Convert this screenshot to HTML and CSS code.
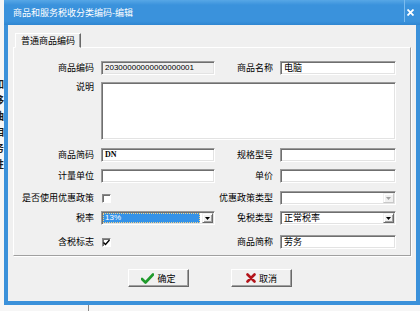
FILE: index.html
```html
<!doctype html>
<html lang="zh-CN">
<head>
    <meta charset="UTF-8">
    <title>商品和服务税收分类编码-编辑</title>
    <link rel="stylesheet" href="styles.css">
</head>
<body>
    <div class="desk-side">如<br>移<br>油<br>相<br>务<br>性</div>
    <div class="desk-line"></div>

    <div class="win">
        <div class="titlebar">
            <span class="title">商品和服务税收分类编码-编辑</span>
            <span class="close">
                <svg width="7" height="7" viewBox="0 0 7 7"><path d="M0.5 0.5L6.5 6.5M6.5 0.5L0.5 6.5" stroke="#fff" stroke-width="1.8"/></svg>
            </span>
        </div>
        <div class="client">
            <div class="tabs"><div class="tab">普通商品编码</div></div>
            <div class="sheet">
                <div class="lbl">商品编码</div>
                <div class="field off num">20300000000000000001</div>
                <div class="lbl">商品名称</div>
                <div class="field">电脑</div>

                <div class="lbl top">说明</div>
                <div class="field memo"></div>

                <div class="lbl">商品简码</div>
                <div class="field num bold">DN</div>
                <div class="lbl">规格型号</div>
                <div class="field"></div>

                <div class="lbl">计量单位</div>
                <div class="field"></div>
                <div class="lbl">单价</div>
                <div class="field"></div>

                <div class="lbl">是否使用优惠政策</div>
                <div class="cell"><span class="chk"></span></div>
                <div class="lbl">优惠政策类型</div>
                <div class="field combo dis">
                    <span class="val"></span>
                    <span class="drop"><svg width="5" height="3" viewBox="0 0 5 3"><path d="M0 0H5L2.5 3Z" fill="#a0a0a0"/></svg></span>
                </div>

                <div class="lbl">税率</div>
                <div class="field combo">
                    <span class="val sel"><span class="focus">13%</span></span>
                    <span class="drop"><svg width="5" height="3" viewBox="0 0 5 3"><path d="M0 0H5L2.5 3Z" fill="#000"/></svg></span>
                </div>
                <div class="lbl">免税类型</div>
                <div class="field combo">
                    <span class="val">正常税率</span>
                    <span class="drop"><svg width="5" height="3" viewBox="0 0 5 3"><path d="M0 0H5L2.5 3Z" fill="#000"/></svg></span>
                </div>

                <div class="lbl">含税标志</div>
                <div class="cell"><span class="chk"><svg width="7" height="7" viewBox="0 0 7 7"><path d="M0.5 3.5L2.5 5.5L6.5 1" fill="none" stroke="#000" stroke-width="1.4"/></svg></span></div>
                <div class="lbl">商品简称</div>
                <div class="field">劳务</div>
            </div>
            <div class="buttons">
                <div class="btn">
                    <svg width="13" height="11" viewBox="0 0 13 11"><path d="M1 6L4.5 9.5L12 1.5" fill="none" stroke="#1f9a2c" stroke-width="2.6" stroke-linecap="round" stroke-linejoin="round"/></svg>
                    确定
                </div>
                <div class="btn">
                    <svg width="10" height="10" viewBox="0 0 10 10"><path d="M1.5 1.5L8.5 8.5M8.5 1.5L1.5 8.5" stroke="#b3141a" stroke-width="2.6" stroke-linecap="round"/></svg>
                    取消
                </div>
            </div>
        </div>
    </div>
</body>
</html>
```

FILE: styles.css
```css
*{padding:0;margin:0;box-sizing:border-box;}

body{
    width:420px;
    height:311px;
    overflow:hidden;
    position:relative;
    background:#f6f6f6;
    font-family:"Noto Sans CJK SC","Liberation Sans",sans-serif;
    font-size:9px;
    color:#000;
}

/* bits of the app behind the dialog */
.desk-side{
    position:absolute;
    left:-6px;
    top:76px;
    font-size:10px;
    line-height:16px;
    font-weight:bold;
    color:#1a1a1a;
}
.desk-line{
    position:absolute;
    left:88px;
    top:305px;
    width:1px;
    height:6px;
    background:#888;
}

.win{
    position:absolute;
    left:4px;
    top:0;
    width:416px;
    height:305px;
    padding:0 4px 4px 4px;
    background:#3b91da;
    display:flex;
    flex-direction:column;
}
.titlebar{
    height:25px;
    display:flex;
    align-items:center;
    background:linear-gradient(#57a7e6,#3a92dc 20%,#3a92dc 85%,#2f86d1);
    margin:0 -4px;
    padding:0 4px 0 9px;
}
.title{
    flex:1;
    color:#fff;
    font-size:9px;
}
.close{
    width:12px;
    height:22px;
    align-self:flex-start;
    border-left:1px solid #7cbcef;
    display:flex;
    align-items:center;
    justify-content:center;
    padding-top:2px;
}

.client{
    flex:1;
    background:#f0f0f0;
    padding:8px 5px 0 5px;
}
.tabs{
    display:flex;
    padding-left:2px;
}
.tab{
    height:15px;
    padding:0 5px;
    line-height:14px;
    background:#f0f0f0;
    border:1px solid;
    border-color:#fff #696969 #f0f0f0 #fff;
    box-shadow:inset -1px 0 0 #a0a0a0;
    margin-bottom:-1px;
    position:relative;
}
.sheet{
    height:209px;
    border:1px solid;
    border-color:#fff #a0a0a0 #a0a0a0 #fff;
    box-shadow:1px 1px 0 #fff;
    padding:13px 0 5px 0;
    display:grid;
    grid-template-columns:87px 114px 65px 116px;
    grid-template-rows:21px 66px 21px 22px 20px 24px 14px;
    align-items:start;
}
.lbl{
    height:14px;
    line-height:14px;
    text-align:right;
    padding-right:7px;
    white-space:nowrap;
}
.lbl.top{
    line-height:10px;
}
.field{
    height:14px;
    background:#fff;
    border:1px solid;
    border-color:#9a9a9a #fff #fff #9a9a9a;
    box-shadow:inset 1px 1px 0 #6f6f6f,inset -1px -1px 0 #e3e3e3;
    padding-left:3px;
    line-height:12px;
    white-space:nowrap;
    overflow:hidden;
}
.field.off{
    background:#f0f0f0;
}
.num{
    font-family:"Liberation Sans",sans-serif;
    font-size:8px;
}
.bold{
    font-family:"Liberation Serif",serif;
    font-weight:bold;
}
.memo{
    grid-column:2 / 5;
    height:58px;
}
.cell{
    height:14px;
    display:flex;
    align-items:center;
    padding-left:1px;
}
.chk{
    width:9px;
    height:9px;
    background:#fff;
    border:1px solid;
    border-color:#8a8a8a #fff #fff #8a8a8a;
    box-shadow:inset 1px 1px 0 #6f6f6f;
    display:flex;
    align-items:center;
    justify-content:center;
}

.combo{
    display:flex;
    padding:1px;
}
.combo .val{
    flex:1;
    padding-left:2px;
    line-height:10px;
}
.combo .val.sel{
    background:#3492e8;
    color:#fff;
    padding:0;
    margin-right:2px;
}
.combo .focus{
    display:block;
    height:100%;
    border:1px dotted #f2d38a;
    padding-left:1px;
    font-family:"Liberation Sans",sans-serif;
    font-size:8px;
    line-height:8px;
}
.combo .drop{
    width:11px;
    background:#f0f0f0;
    border:1px solid;
    border-color:#f0f0f0 #696969 #696969 #f0f0f0;
    box-shadow:inset 1px 1px 0 #fff,inset -1px -1px 0 #a0a0a0;
    display:flex;
    align-items:center;
    justify-content:center;
}
.combo.dis .drop{
    border-color:#f0f0f0 #c8c8c8 #c8c8c8 #f0f0f0;
    box-shadow:inset 1px 1px 0 #fff;
}

.buttons{
    display:flex;
    gap:42px;
    padding-left:115px;
    margin-top:13px;
}
.btn{
    width:61px;
    height:18px;
    background:#f0f0f0;
    border:1px solid;
    border-color:#fff #696969 #696969 #fff;
    box-shadow:inset -1px -1px 0 #a0a0a0;
    display:flex;
    align-items:center;
    justify-content:center;
    gap:3px;
    font-size:9px;
}
```
